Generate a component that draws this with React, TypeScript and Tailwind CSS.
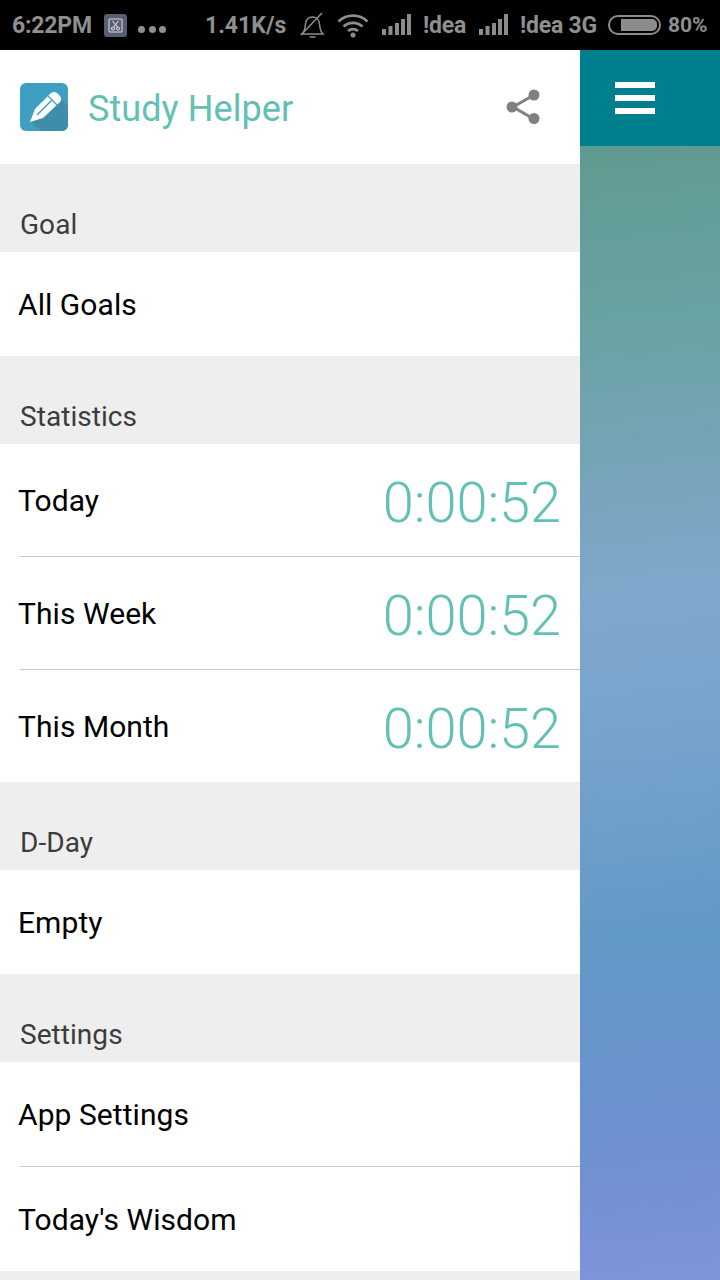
import React from "react";

const font = { fontFamily: "Roboto, sans-serif" };

function Section({ label }: { label: string }) {
  return (
    <div className="h-[88px] bg-[#eeeeee] flex items-end pl-[20px] pb-[9px]">
      <span className="text-[28px] leading-[36px] tracking-[0.05px] text-[#3c3c3c]">{label}</span>
    </div>
  );
}

function Row({ label, time, h, line }: { label: string; time?: string; h: string; line?: boolean }) {
  return (
    <div className={`${h} bg-white pl-[20px]`}>
      <div className={`h-full flex items-center justify-between pr-[19px] ${line ? "border-b border-[#c8c8c8]" : ""}`}>
        <span className="text-[30px] leading-[40px] tracking-[0.06px] text-black -ml-[2px] mt-[2px]">{label}</span>
        {time && <span className="text-[56px] leading-[64px] font-light tracking-[-0.1px] text-[#62c1b4] mt-[5px]">{time}</span>}
      </div>
    </div>
  );
}

function Signal() {
  return (
    <svg width="30" height="22" viewBox="0 0 30 22" fill="#8c8c8c">
      <rect x="0" y="15" width="4" height="6" />
      <rect x="6.500" y="12" width="4" height="9" />
      <rect x="13" y="9" width="4" height="12" />
      <rect x="19" y="5" width="4" height="16" />
      <rect x="25" y="0" width="4" height="21" />
    </svg>
  );
}

export default function App() {
  return (
    <div className="w-[720px] h-[1280px] flex flex-col overflow-hidden bg-white" style={font}>
      <div className="h-[50px] bg-black flex items-center text-[#8f8f8f] font-bold text-[23px] whitespace-nowrap pl-[12px]">
        <span className="w-[92px] tracking-[-0.2px] mt-[2px]">6:22PM</span>
        <div className="w-[23px] h-[23px] rounded-[3px] bg-[#5a5e72] flex items-center justify-center">
          <svg width="15" height="15" viewBox="0 0 15 15" fill="none" stroke="#d8d8d8" strokeWidth="1.100">
            <rect x="1" y="1" width="13" height="13" rx="1" />
            <path d="M4.500 3l5 6M10.500 3l-5 6" />
            <circle cx="5" cy="10.500" r="1.500" />
            <circle cx="10" cy="10.500" r="1.500" />
          </svg>
        </div>
        <div className="ml-[11px] mt-[8px] flex gap-[3.500px]">
          <div className="w-[7px] h-[7px] rounded-full bg-[#8f8f8f]" />
          <div className="w-[7px] h-[7px] rounded-full bg-[#8f8f8f]" />
          <div className="w-[7px] h-[7px] rounded-full bg-[#8f8f8f]" />
        </div>
        <span className="ml-[39px] w-[81px] mt-[2px]">1.41K/s</span>
        <svg className="ml-[14px]" width="25" height="27" viewBox="0 0 25 27" fill="none" stroke="#8c8c8c" strokeWidth="1.500">
          <path d="M2 22h21c-3-3-3-5-3.500-10-.4-4-3-7-7-7-4 0-6.500 3-7 7C5 17 5 19 2 22z" />
          <path d="M9.500 25h6" />
          <path d="M1 23L22 1" />
        </svg>
        <svg className="ml-[12px]" width="32" height="25" viewBox="0 0 32 25" fill="none" stroke="#8c8c8c" strokeWidth="2.800">
          <path d="M1.500 8.500a21 21 0 0 1 29 0" />
          <path d="M6.500 13.500a14 14 0 0 1 19 0" />
          <path d="M11 18a7.500 7.500 0 0 1 10 0" />
          <circle cx="16" cy="22" r="2.500" fill="#8c8c8c" stroke="none" />
        </svg>
        <div className="ml-[13px]"><Signal /></div>
        <span className="ml-[11px] w-[45px] tracking-[-0.2px] mt-[2px]">!dea</span>
        <div className="ml-[11px]"><Signal /></div>
        <span className="ml-[11px] w-[77px] tracking-[-0.2px] mt-[2px]">!dea 3G</span>
        <div className="ml-[11px] w-[53px] h-[20px] rounded-full border-[2px] border-[#8c8c8c] flex items-center pl-[11px] pr-[2px]">
          <div className="h-[12px] flex-1 bg-[#8c8c8c] rounded-r-[5px]" />
        </div>
        <span className="ml-[7px] text-[21px] mt-[1px]">80%</span>
      </div>
      <div className="flex flex-1 min-h-0">
        <div className="w-[580px] shrink-0 flex flex-col">
          <div className="h-[114px] bg-white flex items-center pl-[20px] pr-[38px]">
            <svg className="shrink-0" width="48" height="48" viewBox="0 0 48 48">
              <rect width="48" height="48" rx="6" fill="#3f9fc0" />
              <path d="M12 39L38 13L48 23V42a6 6 0 0 1-6 6H21z" fill="#3d8dab" />
              <path d="M10 39l5-13L31 10c3-2 5-1 7 1l1 1c2 2 3 4 1 7L23 35z" fill="#fff" />
              <path d="M28 13l9 9" stroke="#3f9fc0" strokeWidth="1.300" fill="none" />
              <path d="M17.500 31.500L31 18" stroke="#3f9fc0" strokeWidth="1.500" strokeLinecap="round" fill="none" />
            </svg>
            <span className="ml-[20px] flex-1 text-[36px] leading-[44px] tracking-[0.08px] text-[#62c1b4] mt-[4px]">Study Helper</span>
            <svg width="36" height="36" viewBox="0 0 36 36" fill="#808080" stroke="#808080">
              <path d="M27 6.500L7 18l20 11.500" fill="none" strokeWidth="3" />
              <circle cx="28" cy="6" r="5.500" stroke="none" />
              <circle cx="6" cy="18" r="5.500" stroke="none" />
              <circle cx="28" cy="29.500" r="5.500" stroke="none" />
            </svg>
          </div>
          <Section label="Goal" />
          <Row label="All Goals" h="h-[104px]" />
          <Section label="Statistics" />
          <Row label="Today" time="0:00:52" h="h-[113px]" line />
          <Row label="This Week" time="0:00:52" h="h-[113px]" line />
          <Row label="This Month" time="0:00:52" h="h-[112px]" />
          <Section label="D-Day" />
          <Row label="Empty" h="h-[104px]" />
          <Section label="Settings" />
          <Row label="App Settings" h="h-[105px]" line />
          <Row label="Today's Wisdom" h="h-[104px]" />
          <div className="flex-1 bg-[#eeeeee]" />
        </div>
        <div className="flex-1 flex flex-col">
          <div className="h-[96px] bg-[#007f8e] flex items-center pl-[35px]">
            <div className="w-[40px] flex flex-col gap-[7px]">
              <div className="h-[6px] bg-white" />
              <div className="h-[6px] bg-white" />
              <div className="h-[6px] bg-white" />
            </div>
          </div>
          <div className="flex-1 bg-[linear-gradient(174deg,#5f9a90_0%,#69a2a3_16%,#78a4bb_30%,#7fa7cc_40%,#78a4cc_50%,#6298c6_70%,#6c90d0_86%,#8093da_100%)]" />
        </div>
      </div>
    </div>
  );
}
